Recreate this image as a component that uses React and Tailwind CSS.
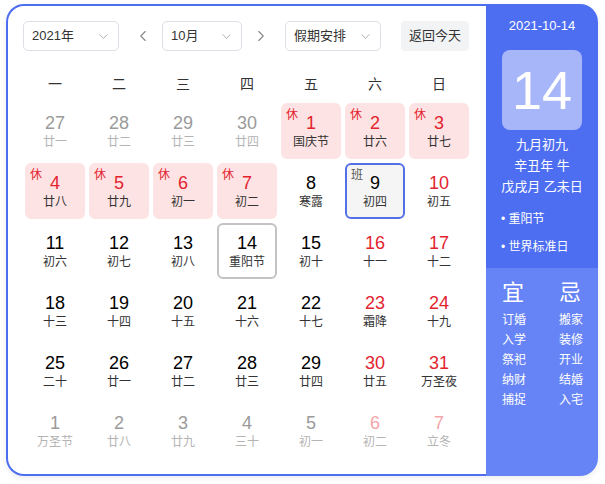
import { ChevronDown, ChevronLeft, ChevronRight } from 'lucide-react'

const font = { fontFamily: '"Liberation Sans", "Noto Sans CJK SC", sans-serif' }

// kind: prev | next | cur ; red = weekend ; rest = 休 ; work = 班 ; today
const weeks = [
  [
    { d: 27, l: '廿一', kind: 'prev' },
    { d: 28, l: '廿二', kind: 'prev' },
    { d: 29, l: '廿三', kind: 'prev' },
    { d: 30, l: '廿四', kind: 'prev' },
    { d: 1, l: '国庆节', rest: true },
    { d: 2, l: '廿六', rest: true },
    { d: 3, l: '廿七', rest: true },
  ],
  [
    { d: 4, l: '廿八', rest: true },
    { d: 5, l: '廿九', rest: true },
    { d: 6, l: '初一', rest: true },
    { d: 7, l: '初二', rest: true },
    { d: 8, l: '寒露' },
    { d: 9, l: '初四', work: true },
    { d: 10, l: '初五', red: true },
  ],
  [
    { d: 11, l: '初六' },
    { d: 12, l: '初七' },
    { d: 13, l: '初八' },
    { d: 14, l: '重阳节', today: true },
    { d: 15, l: '初十' },
    { d: 16, l: '十一', red: true },
    { d: 17, l: '十二', red: true },
  ],
  [
    { d: 18, l: '十三' },
    { d: 19, l: '十四' },
    { d: 20, l: '十五' },
    { d: 21, l: '十六' },
    { d: 22, l: '十七' },
    { d: 23, l: '霜降', red: true },
    { d: 24, l: '十九', red: true },
  ],
  [
    { d: 25, l: '二十' },
    { d: 26, l: '廿一' },
    { d: 27, l: '廿二' },
    { d: 28, l: '廿三' },
    { d: 29, l: '廿四' },
    { d: 30, l: '廿五', red: true },
    { d: 31, l: '万圣夜', red: true },
  ],
  [
    { d: 1, l: '万圣节', kind: 'next' },
    { d: 2, l: '廿八', kind: 'next' },
    { d: 3, l: '廿九', kind: 'next' },
    { d: 4, l: '三十', kind: 'next' },
    { d: 5, l: '初一', kind: 'next' },
    { d: 6, l: '初二', kind: 'next', red: true },
    { d: 7, l: '立冬', kind: 'next', red: true },
  ],
]

const yi = ['订婚', '入学', '祭祀', '纳财', '捕捉']
const ji = ['搬家', '装修', '开业', '结婚', '入宅']

function Select({ label, width }) {
  return (
    <div
      className={`${width} h-[30px] border border-[#dcdfe6] rounded-[5px] pl-[8px] pr-[7px] flex items-center justify-between text-[13px] text-[#333]`}
    >
      <span>{label}</span>
      <ChevronDown size={15} strokeWidth={1.5} className="text-[#a8abb2]" />
    </div>
  )
}

function DayCell({ day }) {
  const outside = day.kind === 'prev' || day.kind === 'next'
  let box = 'bg-white'
  if (day.rest) box = 'bg-[#fde3e3]'
  if (day.work) box = 'bg-[#f5f5f5] border-2 border-[#5470e6]'
  if (day.today) box = 'bg-white border-2 border-[#c3c3c3]'

  let num = 'text-black'
  if (outside) num = day.red ? 'text-[#f3a5a8]' : 'text-[#9a9a9a]'
  else if (day.rest || day.red) num = 'text-[#e3242f]'

  const lunar = outside ? 'text-[#b4b4b4]' : 'text-[#333]'

  return (
    <div className={`relative mx-[2px] h-[56px] rounded-[6px] flex flex-col items-center justify-center ${box}`}>
      {day.rest && (
        <span className="absolute left-[5px] top-[4px] text-[12px] leading-[16px] text-[#e3242f]">休</span>
      )}
      {day.work && (
        <span className="absolute left-[4px] top-[2px] text-[12px] leading-[16px] text-[#555]">班</span>
      )}
      <span className={`text-[18px] leading-[22px] ${num}`}>{day.d}</span>
      <span className={`text-[12px] leading-[16px] ${lunar}`}>{day.l}</span>
    </div>
  )
}

export default function App() {
  return (
    <div className="w-[605px] h-[484px] bg-white pl-[6px] pt-[4px]" style={font}>
      <div className="flex w-[592px] h-[472px] rounded-[18px] shadow-[0_2px_6px_rgba(0,0,0,0.08)]">
        {/* left: calendar */}
        <div className="w-[480px] h-full border-2 border-r-0 border-[#4e6ef2] rounded-l-[18px] px-[15px] pt-[15px]">
          <div className="flex items-center h-[30px]">
            <Select label="2021年" width="w-[96px]" />
            <ChevronLeft size={18} strokeWidth={1.5} className="ml-[15px] text-[#888]" />
            <div className="ml-[10px]">
              <Select label="10月" width="w-[80px]" />
            </div>
            <ChevronRight size={18} strokeWidth={1.5} className="ml-[10px] text-[#888]" />
            <div className="ml-[15px]">
              <Select label="假期安排" width="w-[96px]" />
            </div>
            <div className="ml-[20px] w-[68px] h-[30px] rounded-[4px] bg-[#f2f3f5] flex items-center justify-center text-[13px] text-[#333]">
              返回今天
            </div>
          </div>

          <div className="grid grid-cols-7 h-[36px] mt-[15px] items-center text-[14px] text-[#333] text-center">
            {['一', '二', '三', '四', '五', '六', '日'].map((w) => (
              <span key={w}>{w}</span>
            ))}
          </div>

          <div className="grid grid-cols-7 gap-y-[4px] mt-[1px]">
            {weeks.flat().map((day, i) => (
              <DayCell key={i} day={day} />
            ))}
          </div>
        </div>

        {/* right: detail panel */}
        <div className="w-[112px] h-full flex flex-col text-white">
          <div className="h-[264px] bg-[#4e6ef2] rounded-tr-[18px] pt-[13px] flex flex-col">
            <div className="text-[13px] leading-[18px] text-center">2021-10-14</div>
            <div className="mt-[15px] mx-auto w-[80px] h-[80px] rounded-[8px] bg-[#a6b6f9] flex items-center justify-center text-[54px] leading-none">
              14
            </div>
            <div className="mt-[4px] text-[13px] leading-[21px] text-center whitespace-nowrap">
              <div>九月初九</div>
              <div>辛丑年 牛</div>
              <div>戊戌月 乙未日</div>
            </div>
            <div className="mt-[8px] pl-[15px] text-[12px] leading-[28px] whitespace-nowrap">
              <div>• 重阳节</div>
              <div>• 世界标准日</div>
            </div>
          </div>
          <div className="flex-1 bg-[#6684f5] rounded-br-[18px] pt-[12px] pl-[16px] flex gap-[33px]">
            <div className="flex flex-col">
              <span className="text-[22px] leading-[26px] mb-[4px]">宜</span>
              {yi.map((t) => (
                <span key={t} className="text-[12px] leading-[20px]">{t}</span>
              ))}
            </div>
            <div className="flex flex-col">
              <span className="text-[22px] leading-[26px] mb-[4px]">忌</span>
              {ji.map((t) => (
                <span key={t} className="text-[12px] leading-[20px]">{t}</span>
              ))}
            </div>
          </div>
        </div>
      </div>
    </div>
  )
}
